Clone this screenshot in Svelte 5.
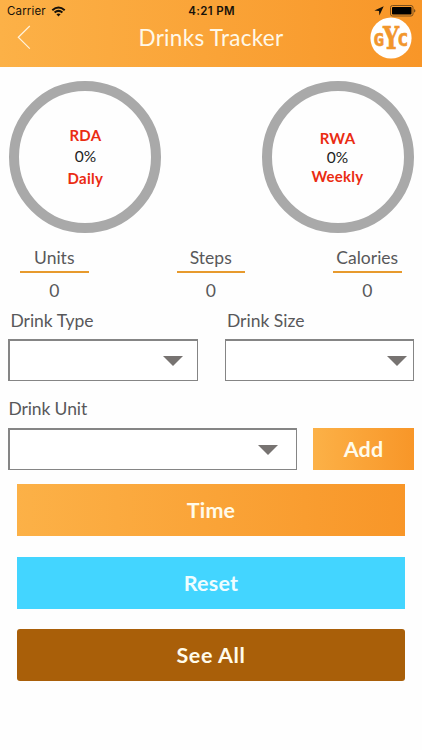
<script lang="ts">
  type Ring = { name: string, title: string, percent: number, period: string }

  let rings: Ring[] = [
    { name: 'daily', title: 'RDA', percent: 0, period: 'Daily' },
    { name: 'weekly', title: 'RWA', percent: 0, period: 'Weekly' }
  ]

  let stats = [
    { label: 'Units', value: 0 },
    { label: 'Steps', value: 0 },
    { label: 'Calories', value: 0 }
  ]

  function reset() {
    rings = rings.map(ring => ({ ...ring, percent: 0 }))
    stats = stats.map(stat => ({ ...stat, value: 0 }))
  }
</script>

<div class="screen">
  <header>
    <div class="status">
      <div class="status-side">
        <span class="carrier">Carrier</span>
        <svg class="wifi" width="15" height="11" viewBox="0 0 14 11" fill="none" stroke="#17120a" stroke-width="2">
          <path d="M0.8 4.2Q7 -1.3 13.2 4.2" />
          <path d="M3.1 6.6Q7 3.2 10.9 6.6" />
          <path d="M4.9 8.2Q7 6.6 9.1 8.2L7 10.5Z" fill="#17120a" stroke="none" />
        </svg>
      </div>
      <span class="clock">4:21 PM</span>
      <div class="status-side end">
        <svg width="10" height="10" viewBox="0 0 10 10">
          <path d="M9.7 0.3L5.4 9.5L5 5L0.4 4.6Z" fill="#17120a" />
        </svg>
        <svg width="26" height="12" viewBox="0 0 26 12">
          <rect x="0.5" y="0.5" width="22.5" height="10.5" rx="2" fill="none" stroke="#7c501c" />
          <rect x="2" y="2" width="19.5" height="7.5" rx="0.8" fill="#000" />
          <path d="M24 4Q25.4 4.4 25.4 5.8Q25.4 7.2 24 7.6Z" fill="#7c501c" />
        </svg>
      </div>
    </div>

    <div class="nav">
      <button class="back" aria-label="Back">
        <svg width="14" height="25" viewBox="0 0 14 25">
          <path d="M12.8 1L1.3 12.3L12.8 23.6" fill="none" stroke="#fff3dc" stroke-width="1.2" />
        </svg>
      </button>
      <h1>Drinks Tracker</h1>
      <svg class="logo" width="42" height="42" viewBox="0 0 42 42">
        <circle cx="21" cy="21" r="20.6" fill="#fff" />
        <g class="logo-text">
          <text x="3.4" y="29.4" font-size="17" textLength="10.6" lengthAdjust="spacingAndGlyphs">G</text>
          <text class="slab" x="13" y="32" font-size="31" textLength="16.2" lengthAdjust="spacingAndGlyphs">Y</text>
          <text x="27.6" y="29.4" font-size="17" textLength="10.6" lengthAdjust="spacingAndGlyphs">C</text>
        </g>
      </svg>
    </div>
  </header>

  <section class="rings">
    {#each rings as ring}
      <div class="ring {ring.name}">
        <strong>{ring.title}</strong>
        <span>{ring.percent}%</span>
        <strong>{ring.period}</strong>
      </div>
    {/each}
  </section>

  <section class="stats">
    {#each stats as stat}
      <div class="stat">
        <span class="stat-label">{stat.label}</span>
        <span class="stat-value">{stat.value}</span>
      </div>
    {/each}
  </section>

  {#snippet picker(label: string)}
    <button class="picker" aria-label={label}>
      <svg width="20" height="10" viewBox="0 0 20 10">
        <path d="M0 0H20L10 10Z" fill="#777371" />
      </svg>
    </button>
  {/snippet}

  <section class="row">
    <div class="field type">
      <span class="field-label">Drink Type</span>
      {@render picker('Drink Type')}
    </div>
    <div class="field size">
      <span class="field-label">Drink Size</span>
      {@render picker('Drink Size')}
    </div>
  </section>

  <section class="row unit-row">
    <div class="field unit">
      <span class="field-label">Drink Unit</span>
      {@render picker('Drink Unit')}
    </div>
    <button class="btn add">Add</button>
  </section>

  <section class="actions">
    <button class="btn time">Time</button>
    <button class="btn reset" on:click={reset}>Reset</button>
    <button class="btn all">See All</button>
  </section>
</div>

<style>
  :global(body) {
    margin: 0;
    background: #fefefe;
  }

  .screen {
    width: 422px;
    height: 750px;
    overflow: hidden;
    background: #fefefe;
    color: #58585a;
    font-family: Lato, sans-serif;
  }

  button {
    padding: 0;
    border: none;
    background: none;
    font-family: inherit;
    cursor: pointer;
  }

  svg {
    display: block;
    flex-shrink: 0;
  }

  header {
    height: 67px;
    background: linear-gradient(90deg, #fcb147, #f89628);
  }

  .status {
    display: flex;
    align-items: center;
    height: 16px;
    padding: 3px 6px 0 7px;
    font-family: Inter, sans-serif;
    font-size: 11.5px;
    line-height: 16px;
    color: #17120a;
  }

  .status-side {
    display: flex;
    flex: 1;
    align-items: center;
    gap: 6px;
  }

  .carrier {
    letter-spacing: 0.15px;
  }

  .wifi {
    margin-left: -1px;
  }

  .end {
    justify-content: flex-end;
  }

  .clock {
    font-weight: 600;
    letter-spacing: 0.35px;
  }

  .nav {
    display: flex;
    align-items: flex-start;
    justify-content: space-between;
    padding: 0 10px 0 17px;
  }

  .back {
    width: 35px;
    padding-top: 6px;
  }

  h1 {
    margin: 5px 0 0;
    font-size: 22.5px;
    font-weight: 400;
    line-height: 28px;
    letter-spacing: 0.3px;
    color: #fff8e8;
  }

  .logo {
    margin-top: -2px;
  }

  .logo-text {
    font-family: "DejaVu Sans Mono", monospace;
    font-weight: 700;
    fill: #f2962c;
    stroke: #f2962c;
    stroke-width: 0.6px;
  }

  .slab {
    font-family: "DejaVu Serif", serif;
  }

  .rings {
    display: flex;
    justify-content: space-between;
    padding: 14px 8.5px 0 9.4px;
  }

  .ring {
    display: flex;
    flex-direction: column;
    align-items: center;
    justify-content: center;
    box-sizing: border-box;
    width: 152px;
    height: 152px;
    border: 10px solid #a9a9a9;
    border-radius: 50%;
    font-size: 15.5px;
    line-height: 21.5px;
    color: #222;
  }

  .ring strong {
    font-size: 15px;
    letter-spacing: 0.25px;
    color: #ea2c12;
  }

  .weekly {
    line-height: 19px;
  }

  .stats {
    display: flex;
    justify-content: space-between;
    padding: 12px 20.5px 0 20px;
    font-size: 17.5px;
  }

  .stat {
    display: flex;
    flex-direction: column;
    align-items: center;
    width: 68.5px;
  }

  .stat-label {
    width: 100%;
    height: 26px;
    border-bottom: 2px solid #e79a2d;
    line-height: 25px;
    text-align: center;
  }

  .stat-value {
    height: 35px;
    line-height: 36px;
  }

  .row {
    display: flex;
    justify-content: space-between;
    padding: 0 8px 0 8.4px;
  }

  .field {
    display: flex;
    flex-direction: column;
  }

  .field-label {
    height: 31px;
    padding-left: 2px;
    font-size: 17.5px;
    line-height: 25px;
  }

  .type,
  .size {
    width: 189.5px;
  }

  .size .field-label {
    padding-left: 2.5px;
  }

  .unit {
    width: 289px;
  }

  .picker {
    display: flex;
    align-items: center;
    justify-content: flex-end;
    box-sizing: border-box;
    height: 42px;
    padding-right: 14px;
    border: 1px solid #858585;
    border-width: 2px 1px 1px 2px;
    background: #fff;
  }

  .size .picker {
    padding-right: 6px;
    border-left-width: 1px;
  }

  .unit .picker {
    padding-right: 18px;
  }

  .unit-row {
    align-items: flex-end;
    padding-top: 16px;
  }

  .unit .field-label {
    padding-left: 0;
    line-height: 24px;
    letter-spacing: -0.1px;
  }

  .btn {
    font-size: 21.5px;
    font-weight: 700;
    letter-spacing: 0.2px;
    color: #fffbea;
  }

  .add {
    width: 101px;
    height: 42px;
  }

  .add,
  .time {
    background: linear-gradient(90deg, #fcb147, #f89628);
  }

  .actions {
    display: flex;
    flex-direction: column;
    padding: 14px 17px 0;
  }

  .actions .btn {
    height: 52px;
  }

  .reset {
    margin: 21px 0 20px;
    background: #43d5ff;
    color: #effdff;
  }

  .all {
    border-radius: 3px;
    background: #a95f09;
  }

  .actions .all {
    letter-spacing: 0.6px;
  }
</style>
